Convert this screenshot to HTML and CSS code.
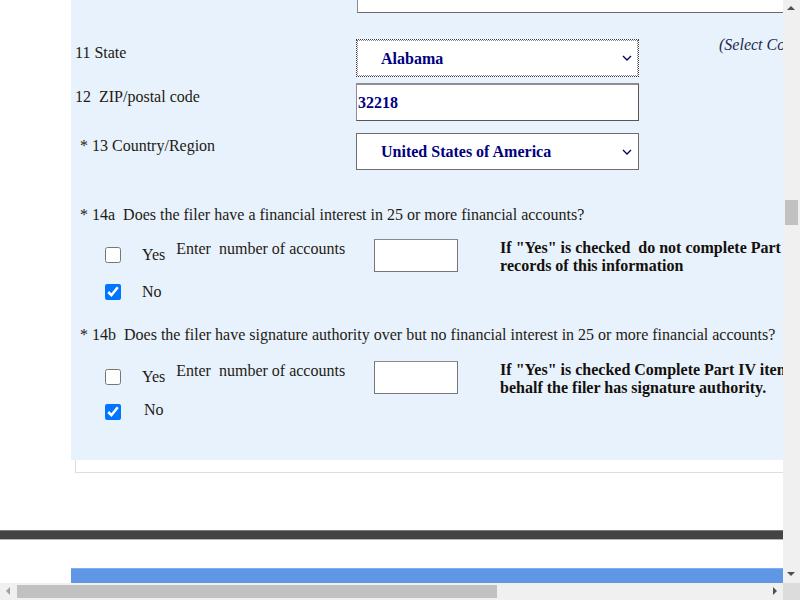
FILE: index.html
```html
<!DOCTYPE html>
<html>
<head>
<meta charset="utf-8">
<link rel="stylesheet" href="styles.css">
</head>
<body>
<div class="viewport">
  <div class="page">
    <div class="panel">
      <div class="row toprow">
        <div class="label"></div>
        <div class="topbox"></div>
      </div>
      <div class="row staterow">
        <div class="label">11 State</div>
        <select class="sel focused"><option>Alabama</option></select>
        <div class="hint">(Select Country first)</div>
      </div>
      <div class="row ziprow">
        <div class="label">12&nbsp; ZIP/postal code</div>
        <input class="zip" type="text" value="32218">
      </div>
      <div class="row countryrow">
        <div class="label star">* 13 Country/Region</div>
        <select class="sel"><option>United States of America</option></select>
      </div>

      <div class="question q14a">* 14a&nbsp; Does the filer have a financial interest in 25 or more financial accounts?</div>
      <div class="opt yes">
        <input type="checkbox" class="cb">
        <span class="optlabel yeslabel">Yes</span>
        <span class="enter">Enter&nbsp; number of accounts</span>
        <input type="text" class="count">
        <div class="note">If "Yes" is checked&nbsp; do not complete Part II or III, but retain<br>records of this information</div>
      </div>
      <div class="opt no">
        <input type="checkbox" class="cb" checked>
        <span class="optlabel">No</span>
      </div>

      <div class="question q14b">* 14b&nbsp; Does the filer have signature authority over but no financial interest in 25 or more financial accounts?</div>
      <div class="opt yes yes2">
        <input type="checkbox" class="cb">
        <span class="optlabel yeslabel">Yes</span>
        <span class="enter">Enter&nbsp; number of accounts</span>
        <input type="text" class="count">
        <div class="note">If "Yes" is checked Complete Part IV items 34 through 43 for each person on whose<br>behalf the filer has signature authority.</div>
      </div>
      <div class="opt no no2">
        <input type="checkbox" class="cb" checked>
        <span class="optlabel nolabel2">No</span>
      </div>
    </div>
    <div class="cardfoot"></div>
    <div class="darkbar"></div>
    <div class="bluebar"></div>
  </div>
</div>
<div class="vscroll">
  <div class="arrow-up"></div>
  <div class="vthumb"></div>
  <div class="arrow-down"></div>
</div>
<div class="hscroll">
  <div class="arrow-left"></div>
  <div class="hthumb"></div>
  <div class="arrow-right"></div>
</div>
<div class="corner"></div>
</body>
</html>
```

FILE: styles.css
```css
html, body {
  margin: 0;
  padding: 0;
  overflow: hidden;
  background: #ffffff;
}
body {
  font-family: "Liberation Serif", "Times New Roman", serif;
  font-size: 16px;
  color: #1e1a14;
  width: 800px;
  height: 600px;
  position: relative;
}
.viewport {
  width: 783px;
  height: 583px;
  overflow: hidden;
}
.page {
  width: 1200px;
}
.panel {
  margin-left: 71px;
  width: 1100px;
  background: #e8f2fd;
  padding-left: 4px;
  padding-bottom: 40px;
}
.row {
  display: flex;
  align-items: flex-start;
}
.label {
  width: 281px;
  flex: none;
  line-height: 18px;
}
.toprow .label { height: 13px; }
.topbox {
  margin-left: 1px;
  width: 600px;
  height: 12px;
  background: #fff;
  border: 1px solid #6b6b6b;
  border-top: none;
  border-left-color: #8a8a8a;
}
.staterow { margin-top: 26px; }
.staterow .label { padding-top: 5px; }
.ziprow { margin-top: 6px; }
.ziprow .label { padding-top: 5px; }
.countryrow { margin-top: 12px; }
.countryrow .label { padding-top: 4px; }
.star { padding-left: 5px; width: 276px; }

.sel {
  -webkit-appearance: none;
  appearance: none;
  width: 283px;
  height: 38px;
  margin: 0;
  padding: 0 0 0 24px;
  font-family: "Liberation Serif", "Times New Roman", serif;
  font-size: 16px;
  font-weight: bold;
  color: #000080;
  background-color: #fff;
  background-image: url("data:image/svg+xml,%3Csvg xmlns='http://www.w3.org/2000/svg' width='10' height='6' viewBox='0 0 10 6'%3E%3Cpath d='M1 1l4 4 4-4' fill='none' stroke='%23000060' stroke-width='1.3'/%3E%3C/svg%3E");
  background-repeat: no-repeat;
  background-position: right 6px center;
  border: 1px solid #6e6e6e;
  border-radius: 0;
  box-sizing: border-box;
}
.countryrow .sel { height: 37px; }
.focused {
  border: 1px dotted #3a3a3a;
  outline: 1px dotted #888;
  outline-offset: -2px;
}
.zip {
  width: 283px;
  height: 38px;
  margin: 0;
  padding: 0 0 0 1px;
  box-sizing: border-box;
  font-family: "Liberation Serif", "Times New Roman", serif;
  font-size: 16px;
  font-weight: bold;
  color: #000080;
  background: #fff;
  border: 1px solid #555;
  border-top: 2px solid #8e8e8e;
  border-left: 1px solid #8e8e8e;
}
.hint {
  margin-left: 80px;
  margin-top: -3px;
  font-style: italic;
  color: #1e2a4a;
  white-space: nowrap;
}

.question {
  padding-left: 5px;
  white-space: nowrap;
  line-height: 18px;
}
.q14a { margin-top: 36px; }
.q14b { margin-top: 25px; }

.opt {
  display: flex;
  align-items: flex-start;
  padding-left: 30px;
  white-space: nowrap;
}
.yes { margin-top: 15px; }
.yes2 { margin-top: 17px; }
.cb {
  width: 16px;
  height: 16px;
  margin: 8px 0 0 0;
  flex: none;
  accent-color: #0075ff;
}
.optlabel {
  margin-left: 21px;
  line-height: 18px;
}
.yeslabel { margin-top: 7px; }
.enter {
  margin-left: 11px;
  margin-top: 1px;
  line-height: 18px;
}
.count {
  width: 84px;
  height: 33px;
  margin: 0 0 0 29px;
  padding: 0;
  box-sizing: border-box;
  background: #fff;
  border: 1px solid #767676;
  border-top-color: #8a8a8a;
}
.note {
  margin-left: 42px;
  margin-top: 0;
  font-weight: bold;
  color: #14100a;
  line-height: 18px;
  height: 36px;
}
.no { margin-top: 0px; }
.no .cb { margin-top: 9px; }
.no .optlabel { margin-top: 8px; }
.no2 { margin-top: -2px; }
.nolabel2 { margin-left: 23px; }
.no2 .optlabel { margin-top: 6px; }

.cardfoot {
  margin-left: 75px;
  width: 1100px;
  height: 12px;
  border: 1px solid #dedede;
  border-top: none;
  background: #fff;
}
.darkbar {
  margin-top: 57px;
  height: 8px;
  background: #444;
  border-top: 1px solid #7a7a7a;
  border-bottom: 1px solid #b5b5b5;
}
.bluebar {
  margin-top: 28px;
  margin-left: 71px;
  height: 30px;
  background: #6096e6;
  border-top: 1px solid #80adee;
}

.vscroll {
  position: absolute;
  left: 783px;
  top: 0;
  width: 17px;
  height: 583px;
  background: #f0f0f0;
}
.vthumb {
  position: absolute;
  left: 2px;
  top: 200px;
  width: 13px;
  height: 25px;
  background: #c1c1c1;
}
.arrow-up {
  position: absolute;
  left: 4px;
  top: 6px;
  width: 0;
  height: 0;
  border-left: 4px solid transparent;
  border-right: 4px solid transparent;
  border-bottom: 4px solid #505050;
}
.arrow-down {
  position: absolute;
  left: 4px;
  top: 572px;
  width: 0;
  height: 0;
  border-left: 4px solid transparent;
  border-right: 4px solid transparent;
  border-top: 4px solid #505050;
}
.hscroll {
  position: absolute;
  left: 0;
  top: 583px;
  width: 783px;
  height: 17px;
  background: #f0f0f0;
}
.hthumb {
  position: absolute;
  left: 17px;
  top: 2px;
  width: 480px;
  height: 13px;
  background: #c1c1c1;
}
.arrow-left {
  position: absolute;
  left: 6px;
  top: 4px;
  width: 0;
  height: 0;
  border-top: 4px solid transparent;
  border-bottom: 4px solid transparent;
  border-right: 4px solid #a0a0a0;
}
.arrow-right {
  position: absolute;
  left: 773px;
  top: 4px;
  width: 0;
  height: 0;
  border-top: 4px solid transparent;
  border-bottom: 4px solid transparent;
  border-left: 4px solid #505050;
}
.corner {
  position: absolute;
  left: 783px;
  top: 583px;
  width: 17px;
  height: 17px;
  background: #dcdcdc;
}
```
